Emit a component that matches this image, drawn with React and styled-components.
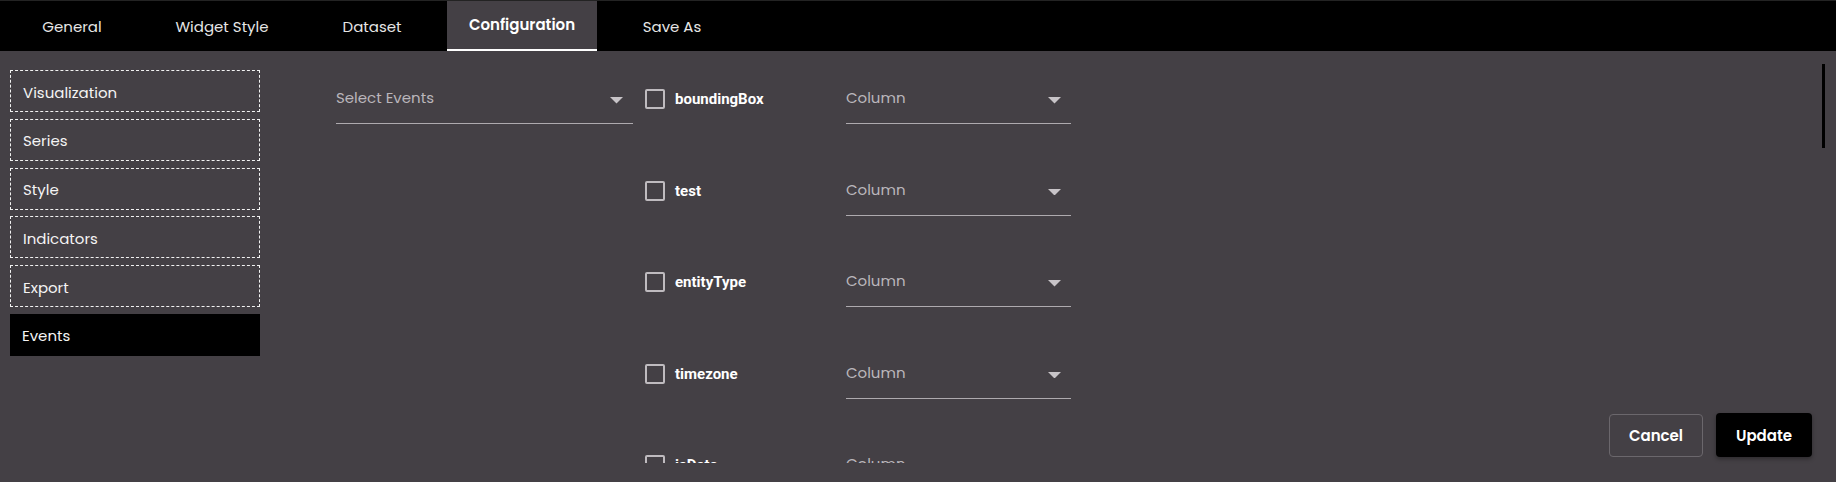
import React from "react";
import styled, { createGlobalStyle } from "styled-components";

const BG = "#444045";
const UI_FONT = `"Poppins", "Open Sans", "Liberation Sans", sans-serif`;

const GlobalStyle = createGlobalStyle`
  html, body {
    margin: 0;
    padding: 0;
    background: ${BG};
    font-family: ${UI_FONT};
  }
  * { box-sizing: border-box; }
`;

const Page = styled.div`
  position: relative;
  width: 1836px;
  height: 482px;
  display: flex;
  flex-direction: column;
  background: ${BG};
  overflow: hidden;
`;

const TabBar = styled.div`
  height: 51px;
  flex: 0 0 51px;
  background: #000;
  border-top: 1px solid #232323;
  display: flex;
  align-items: stretch;
`;

const TabList = styled.div`
  display: flex;
  margin-left: -3px;
`;

const Tab = styled.div`
  width: 150px;
  display: flex;
  align-items: center;
  justify-content: center;
  font-family: ${UI_FONT};
  font-size: 15px;
  color: ${(p) => (p.$active ? "#ffffff" : "#e6e6e6")};
  font-weight: ${(p) => (p.$active ? 600 : 400)};
  background: ${(p) => (p.$active ? BG : "transparent")};
  border-bottom: 2px solid ${(p) => (p.$active ? "#ffffff" : "transparent")};
  padding-top: ${(p) => (p.$active ? "0" : "2px")};
  padding-bottom: ${(p) => (p.$active ? "2px" : "0")};
  cursor: pointer;
`;

const Body = styled.div`
  flex: 1;
  display: flex;
  min-height: 0;
`;

const Sidebar = styled.nav`
  flex: 0 0 260px;
  padding: 19px 0 0 10px;
  display: flex;
  flex-direction: column;
  gap: 6.8px;
`;

const NavItem = styled.div`
  height: 42px;
  display: flex;
  align-items: center;
  padding-left: 12px;
  padding-top: 2px;
  border: ${(p) => (p.$active ? "none" : "1px dashed #f2f2f2")};
  background: ${(p) => (p.$active ? "#000" : "transparent")};
  color: #f4f4f4;
  font-family: ${UI_FONT};
  font-size: 15px;
  cursor: pointer;
`;

const Scroller = styled.div`
  flex: 1;
  margin: 13px 11px 19px 76px;
  overflow-y: auto;
  display: flex;
  align-items: flex-start;
  gap: 12px;
  padding-top: 22px;
  scrollbar-width: none;
  &::-webkit-scrollbar {
    display: none;
  }
`;

const ScrollThumb = styled.div`
  position: absolute;
  right: 11px;
  top: 64px;
  width: 3px;
  height: 84px;
  background: #000;
`;

const Select = styled.div`
  width: ${(p) => p.$width}px;
  height: 38px;
  flex: 0 0 auto;
  display: flex;
  align-items: flex-start;
  justify-content: space-between;
  border-bottom: 1px solid #aeaaae;
  padding-right: 10px;
  cursor: pointer;
`;

const Placeholder = styled.span`
  font-family: ${UI_FONT};
  font-size: 15px;
  line-height: 24px;
  color: #bab6bb;
`;

const Caret = styled.svg`
  width: 13px;
  height: 6.5px;
  margin-top: 11px;
  fill: #c8c4c8;
`;

const FieldList = styled.div`
  display: flex;
  flex-direction: column;
`;

const FieldRow = styled.div`
  height: 91.5px;
  flex: 0 0 91.5px;
  display: flex;
  align-items: flex-start;
`;

const Check = styled.span`
  width: 20px;
  height: 20px;
  margin-top: 3px;
  border: 2px solid #bfbbbf;
  border-radius: 2px;
  flex: 0 0 auto;
`;

const FieldLabel = styled.span`
  width: 181px;
  padding-left: 10px;
  font-family: Roboto, "Liberation Sans", sans-serif;
  font-weight: 700;
  font-size: 15px;
  line-height: 26px;
  color: #ffffff;
`;

const Footer = styled.div`
  position: absolute;
  right: 24px;
  bottom: 25px;
  display: flex;
  align-items: center;
  gap: 13px;
`;

const Button = styled.button`
  height: ${(p) => (p.$primary ? "44px" : "43px")};
  width: ${(p) => (p.$primary ? "96px" : "94px")};
  border-radius: 4px;
  border: ${(p) => (p.$primary ? "none" : "1px solid #6b676c")};
  background: ${(p) => (p.$primary ? "#000" : "transparent")};
  box-shadow: ${(p) => (p.$primary ? "0 2px 4px rgba(0,0,0,0.35)" : "none")};
  color: #fff;
  font-family: ${UI_FONT};
  font-weight: 600;
  font-size: 15px;
  cursor: pointer;
`;

const DropCaret = () => (
  <Caret viewBox="0 0 10 5">
    <path d="M0 0l5 5 5-5z" />
  </Caret>
);

const tabs = ["General", "Widget Style", "Dataset", "Configuration", "Save As"];
const navItems = ["Visualization", "Series", "Style", "Indicators", "Export", "Events"];
const fields = [
  "boundingBox", "test", "entityType", "timezone", "isDate", "latitude",
  "longitude", "createdAt", "updatedAt", "severity", "status", "category",
  "source", "eventId", "deviceId", "region", "priority", "owner",
  "description", "tags",
];

export default function App() {
  return (
    <>
      <GlobalStyle />
      <Page>
        <TabBar>
          <TabList>
            {tabs.map((t) => (
              <Tab key={t} $active={t === "Configuration"}>{t}</Tab>
            ))}
          </TabList>
        </TabBar>
        <Body>
          <Sidebar>
            {navItems.map((n) => (
              <NavItem key={n} $active={n === "Events"}>{n}</NavItem>
            ))}
          </Sidebar>
          <Scroller>
            <Select $width={297}>
              <Placeholder>Select Events</Placeholder>
              <DropCaret />
            </Select>
            <FieldList>
              {fields.map((f) => (
                <FieldRow key={f}>
                  <Check />
                  <FieldLabel>{f}</FieldLabel>
                  <Select $width={225}>
                    <Placeholder>Column</Placeholder>
                    <DropCaret />
                  </Select>
                </FieldRow>
              ))}
            </FieldList>
          </Scroller>
        </Body>
        <ScrollThumb />
        <Footer>
          <Button>Cancel</Button>
          <Button $primary>Update</Button>
        </Footer>
      </Page>
    </>
  );
}
